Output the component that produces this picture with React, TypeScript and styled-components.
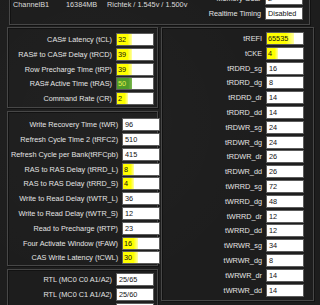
import React from 'react';
import styled, { createGlobalStyle } from 'styled-components';

type Mark = 'none' | 'yellow' | 'green';
type Timing = { label: string; value: string; mark?: Mark };

const primary: Timing[] = [
  { label: 'CAS# Latency (tCL)', value: '32', mark: 'yellow' },
  { label: 'RAS# to CAS# Delay (tRCD)', value: '39', mark: 'yellow' },
  { label: 'Row Precharge Time (tRP)', value: '39', mark: 'yellow' },
  { label: 'RAS# Active Time (tRAS)', value: '50', mark: 'green' },
  { label: 'Command Rate (CR)', value: '2', mark: 'yellow' },
];

const secondary: Timing[] = [
  { label: 'Write Recovery Time (tWR)', value: '96' },
  { label: 'Refresh Cycle Time 2 (tRFC2)', value: '510' },
  { label: 'Refresh Cycle per Bank(tRFCpb)', value: '415' },
  { label: 'RAS to RAS Delay (tRRD_L)', value: '8', mark: 'yellow' },
  { label: 'RAS to RAS Delay (tRRD_S)', value: '4', mark: 'yellow' },
  { label: 'Write to Read Delay (tWTR_L)', value: '36' },
  { label: 'Write to Read Delay (tWTR_S)', value: '12' },
  { label: 'Read to Precharge (tRTP)', value: '23' },
  { label: 'Four Activate Window (tFAW)', value: '16', mark: 'yellow' },
  { label: 'CAS Write Latency (tCWL)', value: '30', mark: 'yellow' },
];

const rtl: Timing[] = [
  { label: 'RTL (MC0 C0 A1/A2)', value: '25/65' },
  { label: 'RTL (MC0 C1 A1/A2)', value: '25/60' },
  { label: 'RTL (MC1 C0 A1/A2)', value: '25/64' },
];

const tertiary: Timing[] = [
  { label: 'tREFI', value: '65535', mark: 'yellow' },
  { label: 'tCKE', value: '4', mark: 'yellow' },
  { label: 'tRDRD_sg', value: '16' },
  { label: 'tRDRD_dg', value: '8' },
  { label: 'tRDRD_dr', value: '14' },
  { label: 'tRDRD_dd', value: '14' },
  { label: 'tRDWR_sg', value: '24' },
  { label: 'tRDWR_dg', value: '24' },
  { label: 'tRDWR_dr', value: '26' },
  { label: 'tRDWR_dd', value: '26' },
  { label: 'tWRRD_sg', value: '72' },
  { label: 'tWRRD_dg', value: '48' },
  { label: 'tWRRD_dr', value: '12' },
  { label: 'tWRRD_dd', value: '12' },
  { label: 'tWRWR_sg', value: '34' },
  { label: 'tWRWR_dg', value: '8' },
  { label: 'tWRWR_dr', value: '14' },
  { label: 'tWRWR_dd', value: '14' },
];

const TimingList = ({ items, gap }: { items: Timing[]; gap: number }) => (
  <Rows $gap={gap}>
    {items.map((t) => (
      <React.Fragment key={t.label}>
        <Label>{t.label}</Label>
        <Box>
          {t.mark && t.mark !== 'none' ? <Marked $mark={t.mark}>{t.value}</Marked> : <Plain>{t.value}</Plain>}
        </Box>
      </React.Fragment>
    ))}
  </Rows>
);

const App = () => {
  return (
    <Page>
      <Global />
      <TopPanel>
        <Info>
          <span>ChannelB1</span>
          <span>16384MB</span>
          <span>Richtek / 1.545v / 1.500v</span>
        </Info>
        <TopRows>
          <Label>Memory Gear</Label>
          <Box>
            <Plain>2</Plain>
          </Box>
          <Label>Realtime Timing</Label>
          <Box>
            <Plain>Disabled</Plain>
          </Box>
        </TopRows>
      </TopPanel>
      <Body>
        <LeftColumn>
          <Group $top={5} $bottom={2}>
            <TimingList items={primary} gap={1.8} />
          </Group>
          <Group $top={6} $bottom={1}>
            <TimingList items={secondary} gap={1.8} />
          </Group>
          <Group $top={3} $bottom={2}>
            <TimingList items={rtl} gap={2} />
          </Group>
        </LeftColumn>
        <RightPanel>
          <TimingList items={tertiary} gap={1.8} />
        </RightPanel>
      </Body>
    </Page>
  );
};

const Global = createGlobalStyle`
  html, body {
    margin: 0;
    padding: 0;
    background: #1d1d1d;
    overflow: hidden;
  }
  body {
    font-family: "Liberation Sans", Arial, sans-serif;
    font-size: 7.3px;
    color: #e2e2e2;
  }
`;

const Page = styled.div`
  width: 320px;
  height: 305px;
  overflow: hidden;
  background:
    radial-gradient(circle at 30% 40%, rgba(255, 255, 255, 0.02), transparent 60%),
    #1d1d1d;
`;

const panel = `
  border: 1px solid #474747;
  box-shadow: inset 1px 1px 0 #121212, 1px 1px 0 #121212;
  box-sizing: border-box;
`;

const TopPanel = styled.div`
  ${panel}
  margin: -12px 0 0 9px;
  width: 301px;
  height: 37px;
  padding: 3px 6px 0 3px;
  display: flex;
  justify-content: space-between;
  align-items: flex-start;
`;

const Info = styled.div`
  display: grid;
  grid-template-columns: 53px 41px auto;
  margin-top: 9px;
  line-height: 8px;
  color: #dcdcdc;
  white-space: nowrap;
`;

const TopRows = styled.div`
  display: grid;
  grid-template-columns: auto 38px;
  grid-auto-rows: 13px;
  column-gap: 4px;
  row-gap: 2px;
`;

const Body = styled.div`
  display: flex;
  gap: 3px;
  margin: 2px 0 0 7px;
  align-items: flex-start;
`;

const LeftColumn = styled.div`
  width: 151px;
  display: flex;
  flex-direction: column;
  gap: 3px;
`;

const Group = styled.div<{ $top: number; $bottom: number }>`
  ${panel}
  padding: ${(p) => p.$top}px 3px ${(p) => p.$bottom}px 3px;
`;

const RightPanel = styled.div`
  ${panel}
  width: 153px;
  padding: 4px 9px 3px 3px;
`;

const Rows = styled.div<{ $gap: number }>`
  display: grid;
  grid-template-columns: 1fr 38px;
  grid-auto-rows: 13px;
  column-gap: 4px;
  row-gap: ${(p) => p.$gap}px;
`;

const Label = styled.div`
  text-align: right;
  white-space: nowrap;
  line-height: 13px;
  color: #e4e4e4;
`;

const Box = styled.div`
  box-sizing: border-box;
  height: 13px;
  background: #ffffff;
  border: 1px solid #5c5c5c;
  color: #111;
  line-height: 11px;
  overflow: hidden;
  white-space: nowrap;
`;

const Plain = styled.span`
  padding-left: 2px;
`;

const Marked = styled.span<{ $mark: Mark }>`
  display: inline-block;
  height: 11px;
  padding: 0 6px 0 1px;
  background: ${(p) =>
    p.$mark === 'green'
      ? 'linear-gradient(to right, #4f9a29 75%, #7cb84f)'
      : 'linear-gradient(to right, #ffff00 70%, rgba(255, 255, 0, 0.35))'};
  color: ${(p) => (p.$mark === 'green' ? '#e8ef4c' : '#111')};
`;

export default App;
